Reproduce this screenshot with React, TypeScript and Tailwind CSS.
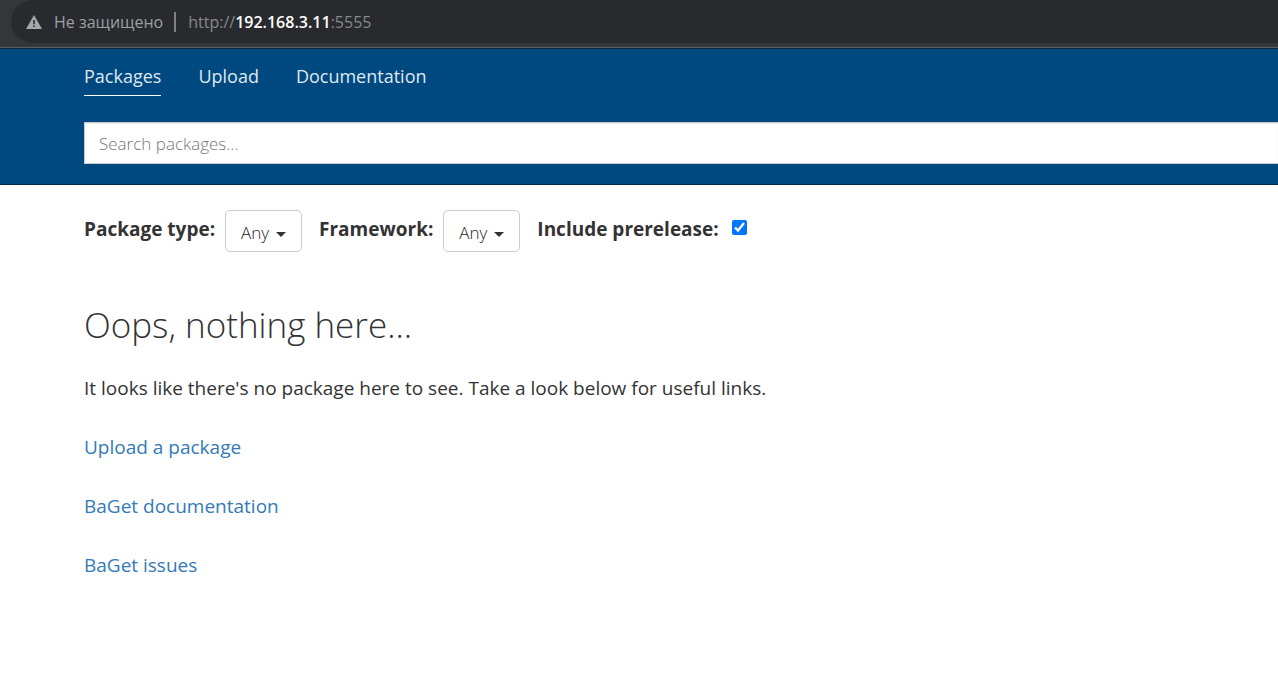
import React, { useState } from "react";

const navItems = ["Packages", "Upload", "Documentation"];
const usefulLinks = ["Upload a package", "BaGet documentation", "BaGet issues"];

function AddressBar() {
  return (
    <div className="border-b border-[#10263c] bg-[#35363a]">
      <div className="flex h-12 border-b border-[#5a5d61]">
        <div className="ml-[11px] flex h-[43px] flex-1 items-center rounded-l-full bg-[#292a2d] pl-[15px] text-[16px] text-[#9aa0a6]">
          <svg width="16" height="14" viewBox="0 0 16 14" aria-hidden="true">
            <path d="M8 0 16 14H0Z" fill="#a3a7ab" />
            <path d="M7.2 5h1.6v4.2H7.2ZM7.2 10.4h1.6V12H7.2Z" fill="#292a2d" />
          </svg>
          <span className="ml-3">Не защищено</span>
          <span className="mr-3 ml-[11px] h-5 w-[2px] bg-[#7d8084]" />
          <span className="text-[#85898d]">
            http://<span className="font-semibold text-white">192.168.3.11</span>:5555
          </span>
        </div>
      </div>
    </div>
  );
}

function Header() {
  return (
    <header className="border-b border-[#04284a] bg-[#004880] pl-[84px]">
      <nav className="flex items-start gap-[37px] pt-[13px] text-[18px] leading-[28px] text-[#dfe8f0]">
        {navItems.map((item, i) => (
          <a
            key={item}
            href="#"
            className={i === 0 ? "border-b border-white pb-[5px]" : ""}
          >
            {item}
          </a>
        ))}
      </nav>
      <input
        type="text"
        aria-label="Search packages"
        placeholder="Search packages..."
        className="mt-[26px] mb-5 block h-[42px] w-full border border-r-0 border-[#ccc] bg-white px-[14px] text-[17px] font-light text-[#555] shadow-[inset_0_1px_1px_rgba(0,0,0,0.08)] outline-none placeholder:text-[#777]"
      />
    </header>
  );
}

function Dropdown({ id, label, options }: { id: string; label: string; options: string[] }) {
  return (
    <div className="flex items-start gap-[10px]">
      <label htmlFor={id} className="pt-[5px] font-bold">
        {label}
      </label>
      <div className="relative">
        <select
          id={id}
          className="block h-[42px] w-[77px] appearance-none rounded-[5px] border border-[#ccc] bg-white pt-1 pl-[15px] text-[17px] font-light text-[#222]"
        >
          {options.map((o) => (
            <option key={o}>{o}</option>
          ))}
        </select>
        <svg
          className="pointer-events-none absolute top-[22px] right-[16px]"
          width="10"
          height="5"
          viewBox="0 0 10 5"
          aria-hidden="true"
        >
          <path d="M0 0h10L5 5Z" fill="#333" />
        </svg>
      </div>
    </div>
  );
}

export default function App() {
  const [prerelease, setPrerelease] = useState(true);
  return (
    <div className="min-h-screen bg-white font-['Open_Sans','Noto_Sans',sans-serif] text-[#333]">
      <AddressBar />
      <Header />
      <main className="pl-[84px] text-[19px] leading-[28px]">
        <form className="flex items-start gap-[17px] pt-[25px]">
          <Dropdown id="type" label="Package type:" options={["Any", "Dependency", ".NET tool", ".NET template"]} />
          <Dropdown id="framework" label="Framework:" options={["Any", ".NET", ".NET Core", ".NET Standard"]} />
          <div className="flex items-start gap-[13px]">
            <label htmlFor="prerelease" className="pt-[5px] font-bold">
              Include prerelease:
            </label>
            <input
              id="prerelease"
              type="checkbox"
              checked={prerelease}
              onChange={(e) => setPrerelease(e.target.checked)}
              className="mt-[10px] size-[15px] accent-[#0075ff]"
            />
          </div>
        </form>
        <h2 className="mt-[50px] text-[35px] font-light leading-[46px]">Oops, nothing here...</h2>
        <p className="mt-[26px]">
          It looks like there's no package here to see. Take a look below for useful links.
        </p>
        {usefulLinks.map((link) => (
          <p key={link} className="mt-[31px]">
            <a href="#" className="text-[#337ab7]">
              {link}
            </a>
          </p>
        ))}
      </main>
    </div>
  );
}
